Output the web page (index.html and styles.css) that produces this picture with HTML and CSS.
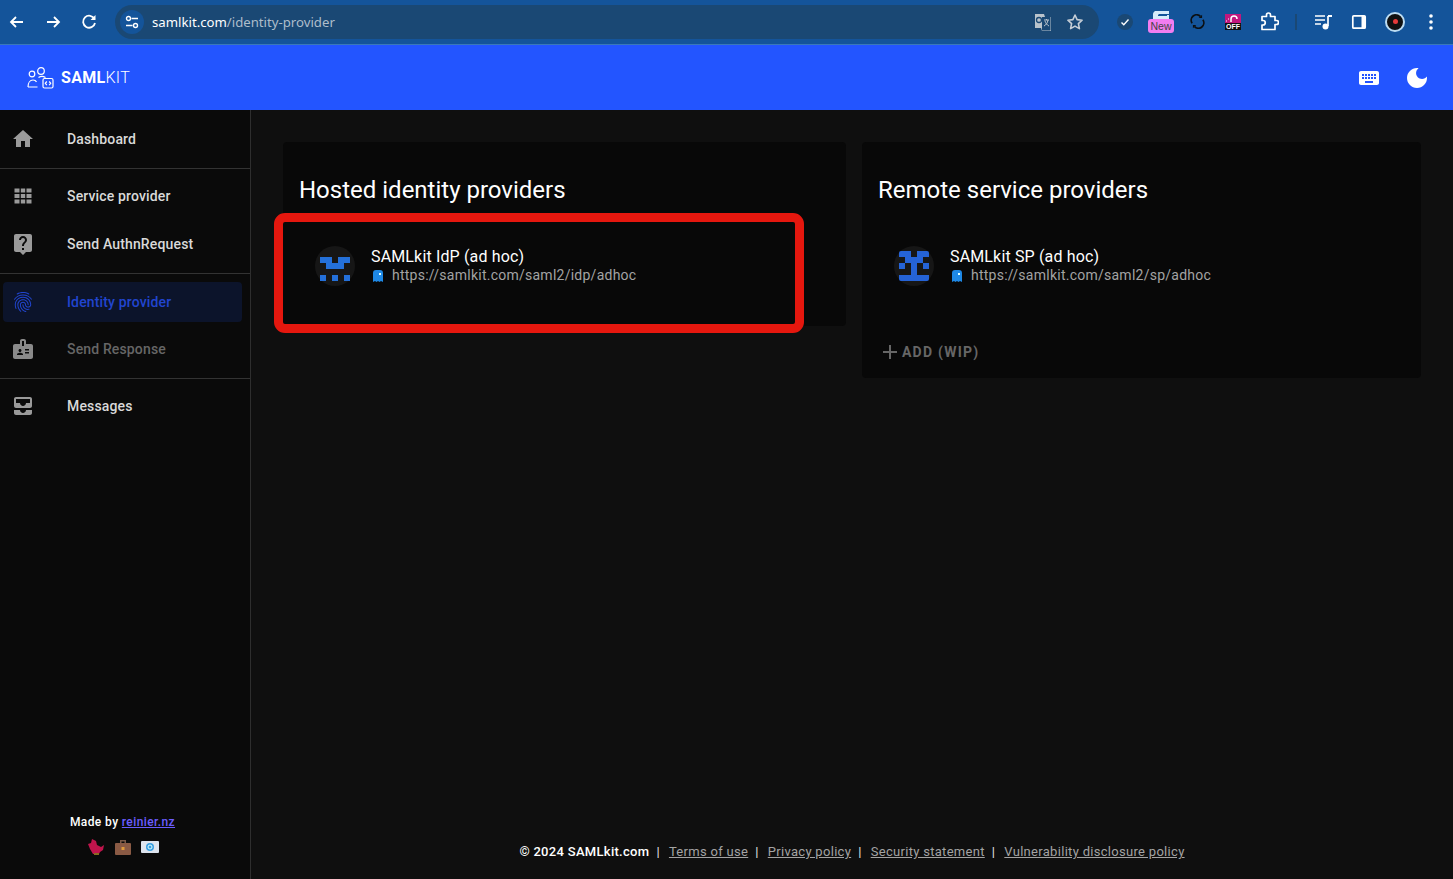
FILE: index.html
```html
<!DOCTYPE html>
<html lang="en">

<head>
    <meta charset="UTF-8">
    <title>SAMLkit - Identity provider</title>
    <link rel="stylesheet" href="styles.css">
</head>

<body>
    <div class="browser_bar">
        <div class="browser_nav">
            <svg class="icon_20" viewBox="0 0 20 20"><path d="M16 10H4M9 5l-5 5 5 5" class="stroke_white"/></svg>
            <svg class="icon_20" viewBox="0 0 20 20"><path d="M4 10h12M11 5l5 5-5 5" class="stroke_white"/></svg>
            <svg class="icon_20" viewBox="0 0 20 20"><path d="M15.500 7A6 6 0 1 0 16 11" class="stroke_white"/><path d="M16.500 3v5h-5z" fill="#fff"/></svg>
        </div>
        <div class="omnibox">
            <span class="site_info">
                <svg width="14" height="14" viewBox="0 0 14 14"><circle cx="3.500" cy="3.500" r="2" class="stroke_thin"/><path d="M6.500 3.500H13M1 10.500h6.500" class="stroke_thin"/><circle cx="10.500" cy="10.500" r="2" class="stroke_thin"/></svg>
            </span>
            <span class="url">samlkit.com<span class="url_path">/identity-provider</span></span>
            <span class="omni_right">
                <svg width="20" height="20" viewBox="0 0 20 20"><path d="M2 2h9l1 3h6v14H9l-1-3H2z" fill="#b9c3cc"/><path d="M9 5h8.500v13.500H9z" fill="#1a4874"/><path d="M11 8h5M13.500 7v1M15 8c-.5 3-2 5-4 6M12 9c.5 2 2 4 4 5" stroke="#b9c3cc" fill="none"/><circle cx="6" cy="8" r="2.500" stroke="#1a4874" stroke-width="1.300" fill="none"/></svg>
                <svg width="20" height="20" viewBox="0 0 20 20"><path d="M10 3l2.100 4.600 5 .6-3.700 3.400 1 5L10 14.100 5.600 16.600l1-5L2.900 8.200l5-.6z" fill="none" stroke="#c6ced6" stroke-width="1.600" stroke-linejoin="round"/></svg>
            </span>
        </div>
        <div class="extensions">
            <span class="ext_slot">
                <span class="ext_check">
                    <svg width="10" height="10" viewBox="0 0 10 10"><path d="M1.500 5.500l2.300 2.300L8.500 2.500" stroke="#fff" stroke-width="1.400" fill="none"/></svg>
                </span>
            </span>
            <span class="ext_slot">
                <span class="ext_new">
                    <svg width="16" height="9" viewBox="0 0 16 9"><path d="M2 0h14v3H6v1h10v5H0V4a4 4 0 0 1 2-4z" fill="#d8ebfa"/><path d="M5 3.500h9v1.500H5z" fill="#14549a"/></svg>
                    <span class="new_badge">New</span>
                </span>
            </span>
            <span class="ext_slot">
                <svg width="15" height="15" viewBox="0 0 18 18"><path d="M2.500 11A6.500 6.500 0 0 1 12.500 2.800M15.500 7a6.500 6.500 0 0 1-10 8.200" stroke="#0b0f12" stroke-width="2" fill="none"/><path d="M14.500 .8v4h-4zM3.500 17.200v-4h4z" fill="#0b0f12"/></svg>
            </span>
            <span class="ext_slot">
                <span class="ext_off">
                    <svg width="16" height="9" viewBox="0 0 16 9"><path d="M6 8V5a3 3 0 0 1 6 0" stroke="#fff" stroke-width="1.500" fill="none"/><path d="M1 7h1M3 5h1" stroke="#fff"/></svg>
                    <span class="off_label">OFF</span>
                </span>
            </span>
            <span class="ext_slot">
                <svg width="20" height="20" viewBox="0 0 20 20"><path d="M3 5h4.500V3.500a2 2 0 0 1 4 0V5H16v4h1.500a2 2 0 0 1 0 4H16v5H3v-4.500h1a2.200 2.200 0 0 0 0-4.500H3z" transform="translate(0 -.5)" stroke="#fff" stroke-width="1.700" fill="none" stroke-linejoin="round"/></svg>
            </span>
            <span class="ext_sep_slot"><span class="ext_sep"></span></span>
            <span class="ext_slot">
                <svg width="20" height="20" viewBox="0 0 20 20"><path d="M2 4h10M2 8h10M2 12h6" stroke="#fff" stroke-width="1.700"/><path d="M15 4v10" stroke="#fff" stroke-width="1.700"/><path d="M15 3h4v2h-4z" fill="#fff"/><circle cx="12.500" cy="14.500" r="3" fill="#fff"/></svg>
            </span>
            <span class="ext_slot">
                <svg width="20" height="20" viewBox="0 0 20 20"><rect x="3.800" y="3.800" width="12.400" height="12.400" rx="1" stroke="#fff" stroke-width="1.700" fill="none"/><path d="M12.500 3.800h3.700v12.400h-3.700z" fill="#fff"/></svg>
            </span>
            <span class="ext_slot">
                <span class="ext_avatar"><span class="avatar_dot"></span></span>
            </span>
            <span class="ext_slot">
                <svg width="6" height="18" viewBox="0 0 6 18"><circle cx="3" cy="3" r="1.800" fill="#fff"/><circle cx="3" cy="9" r="1.800" fill="#fff"/><circle cx="3" cy="15" r="1.800" fill="#fff"/></svg>
            </span>
        </div>
    </div>

    <header class="app_bar">
        <a class="brand">
            <svg width="27" height="22" viewBox="0 0 27 22"><circle cx="14" cy="4" r="3.300" class="logo_line"/><circle cx="5" cy="7" r="2.800" class="logo_line"/><path d="M1 20c0-4 2-7 5-7 1.500 0 3 .8 3.500 2M1 20h9.500M11.500 10.500c2-1.300 5-1.300 7 0" class="logo_line"/><rect x="16" y="11.500" width="10" height="9.500" rx="1.500" class="logo_line"/><path d="M19.800 14.500l-1.500 1.800 1.500 1.800M22.200 14.500l1.500 1.800-1.500 1.800" class="logo_line"/></svg>
            <span class="brand_name"><b>SAML</b>KIT</span>
        </a>
        <div class="app_actions">
            <span class="icon_button">
                <svg class="app_icon" viewBox="0 0 24 24"><path d="M20 5H4c-1.100 0-1.990.9-1.990 2L2 17c0 1.100.9 2 2 2h16c1.100 0 2-.9 2-2V7c0-1.100-.9-2-2-2zm-9 3h2v2h-2V8zm0 3h2v2h-2v-2zM8 8h2v2H8V8zm0 3h2v2H8v-2zm-1 2H5v-2h2v2zm0-3H5V8h2v2zm9 7H8v-2h8v2zm0-4h-2v-2h2v2zm0-3h-2V8h2v2zm3 3h-2v-2h2v2zm0-3h-2V8h2v2z"/></svg>
            </span>
            <span class="icon_button">
                <svg class="app_icon" viewBox="0 0 24 24"><path d="M12 2c-5.500 0-10 4.500-10 10s4.500 10 10 10 10-4.500 10-10c0-.5-.04-1-.11-1.500-1.080 1.510-2.850 2.500-4.860 2.500-3.290 0-5.970-2.680-5.970-5.970 0-2 .99-3.780 2.500-4.860C13 2.040 12.500 2 12 2z"/></svg>
            </span>
        </div>
    </header>

    <div class="layout">
        <nav class="sidebar">
            <div class="menu_group first_group">
                <a class="menu_item">
                    <svg class="menu_icon" viewBox="0 0 24 24"><path d="M10 20v-6h4v6h5v-8h3L12 3 2 12h3v8z"/></svg>
                    Dashboard
                </a>
            </div>
            <div class="menu_group">
                <a class="menu_item">
                    <svg class="menu_icon" viewBox="0 0 24 24"><path d="M3.500 4.500h5v4h-5zM9.800 4.500h4.400v4H9.800zM15.500 4.500h5v4h-5zM3.500 10h5v4h-5zM9.800 10h4.400v4H9.800zM15.500 10h5v4h-5zM3.500 15.500h5v4h-5zM9.800 15.500h4.400v4H9.800zM15.500 15.500h5v4h-5z"/></svg>
                    Service provider
                </a>
                <a class="menu_item">
                    <svg class="menu_icon" viewBox="0 0 24 24"><path d="M19 2H5c-1.110 0-2 .9-2 2v14c0 1.100.89 2 2 2h4l3 3 3-3h4c1.100 0 2-.9 2-2V4c0-1.100-.9-2-2-2zm-6 16h-2v-2h2v2zm2.070-7.750l-.9.920C13.450 11.900 13 12.500 13 14h-2v-.5c0-1.100.45-2.100 1.170-2.830l1.240-1.260c.37-.36.59-.86.59-1.410 0-1.100-.9-2-2-2s-2 .9-2 2H8c0-2.210 1.790-4 4-4s4 1.790 4 4c0 .88-.36 1.680-.93 2.250z"/></svg>
                    Send AuthnRequest
                </a>
            </div>
            <div class="menu_group">
                <a class="menu_item selected">
                    <svg class="menu_icon" viewBox="0 0 24 24"><path d="M17.810 4.470c-.08 0-.16-.02-.23-.06C15.660 3.420 14 3 12.010 3c-1.980 0-3.860.47-5.570 1.410-.24.13-.54.04-.68-.2-.13-.24-.04-.55.2-.68C7.820 2.520 9.860 2 12.010 2c2.130 0 3.990.47 6.030 1.520.25.13.34.43.21.67-.09.18-.26.28-.44.28zM3.500 9.720c-.1 0-.2-.03-.29-.09-.23-.16-.28-.47-.12-.7.99-1.400 2.250-2.500 3.750-3.270C9.980 4.040 14 4.030 17.150 5.650c1.500.77 2.760 1.860 3.750 3.250.16.22.11.54-.12.7-.23.16-.54.11-.7-.12-.9-1.260-2.040-2.250-3.390-2.940-2.870-1.470-6.540-1.470-9.400.01-1.360.7-2.500 1.700-3.400 2.960-.08.14-.23.21-.39.21zm6.250 12.070c-.13 0-.26-.05-.35-.15-.87-.87-1.340-1.430-2.010-2.640-.69-1.230-1.050-2.730-1.050-4.340 0-2.970 2.540-5.390 5.660-5.390s5.660 2.420 5.660 5.390c0 .28-.22.5-.5.5s-.5-.22-.5-.5c0-2.420-2.090-4.390-4.660-4.390-2.570 0-4.660 1.970-4.660 4.390 0 1.440.32 2.770.93 3.850.64 1.150 1.080 1.640 1.850 2.420.19.2.19.51 0 .71-.11.1-.24.15-.37.15zm7.170-1.850c-1.190 0-2.240-.3-3.100-.89-1.490-1.010-2.380-2.650-2.380-4.390 0-.28.22-.5.5-.5s.5.22.5.5c0 1.410.72 2.740 1.940 3.560.71.48 1.540.71 2.540.71.24 0 .64-.03 1.040-.1.27-.05.53.13.58.41.05.27-.13.53-.41.58-.57.11-1.070.12-1.210.12zM14.910 22c-.04 0-.09-.01-.13-.02-1.590-.44-2.630-1.030-3.720-2.100-1.400-1.390-2.170-3.240-2.170-5.220 0-1.620 1.380-2.940 3.080-2.940 1.700 0 3.080 1.320 3.080 2.940 0 1.070.93 1.940 2.080 1.940s2.080-.87 2.080-1.940c0-3.770-3.250-6.830-7.250-6.830-2.840 0-5.440 1.580-6.610 4.030-.39.81-.59 1.760-.59 2.800 0 .78.07 2.010.67 3.610.1.26-.03.55-.29.64-.26.1-.55-.04-.64-.29-.49-1.310-.73-2.610-.73-3.960 0-1.200.23-2.290.68-3.240 1.330-2.790 4.280-4.600 7.510-4.600 4.550 0 8.250 3.510 8.250 7.830 0 1.620-1.380 2.940-3.080 2.940s-3.080-1.320-3.080-2.940c0-1.070-.93-1.940-2.080-1.940s-2.080.87-2.080 1.940c0 1.710.66 3.310 1.870 4.510.95.94 1.860 1.460 3.270 1.850.27.07.42.35.35.61-.05.23-.26.38-.47.38z"/></svg>
                    Identity provider
                </a>
                <a class="menu_item disabled">
                    <svg class="menu_icon" viewBox="0 0 24 24"><path d="M20 7h-5V4c0-1.100-.9-2-2-2h-2c-1.100 0-2 .9-2 2v3H4c-1.100 0-2 .9-2 2v11c0 1.100.9 2 2 2h16c1.100 0 2-.9 2-2V9c0-1.100-.9-2-2-2zM9 12c.83 0 1.500.67 1.500 1.500S9.830 15 9 15s-1.500-.67-1.500-1.500S8.170 12 9 12zm3 6H6v-.75c0-1 2-1.500 3-1.500s3 .5 3 1.500V18zm1-9h-2V4h2v5zm5 7.500h-4V15h4v1.500zm0-3h-4V12h4v1.500z"/></svg>
                    Send Response
                </a>
            </div>
            <div class="menu_group last_group">
                <a class="menu_item">
                    <svg class="menu_icon" viewBox="0 0 24 24"><path d="M19 3H5c-1.100 0-2 .9-2 2v7c0 1.100.9 2 2 2h14c1.100 0 2-.9 2-2V5c0-1.100-.9-2-2-2zm0 6h-4c0 1.620-1.380 3-3 3s-3-1.380-3-3H5V5h14v4zm-4 7h6v3c0 1.100-.9 2-2 2H5c-1.100 0-2-.9-2-2v-3h6c0 1.660 1.340 3 3 3s3-1.340 3-3z"/></svg>
                    Messages
                </a>
            </div>
            <div class="made_by">
                <p>Made by <a href="#">reinier.nz</a></p>
                <div class="made_icons">
                    <svg width="18" height="18" viewBox="0 0 18 18"><path d="M1 6l3-1 1-4 4 2 1 4 4 2 3-2-1 5-3 2-1 2H6L3 11z" fill="#c0144c"/><path d="M7 15h5v2H7z" fill="#8a6a20"/></svg>
                    <svg width="18" height="18" viewBox="0 0 18 18"><path d="M6 2h6v4h-1.500V3.500h-3V6H6z" fill="#7b5a48"/><rect x="1" y="5" width="16" height="12" rx="1" fill="#8a5a44"/><rect x="7.500" y="9" width="3" height="3" fill="#e09a3a"/></svg>
                    <svg width="18" height="18" viewBox="0 0 18 18"><rect y="3" width="18" height="12" rx="1" fill="#dde4ee"/><circle cx="9" cy="9" r="4" fill="#3a9ee0"/><circle cx="9" cy="9" r="2" fill="none" stroke="#dff"/></svg>
                </div>
            </div>
        </nav>

        <main class="main">
            <div class="cards">
                <section class="card card_hosted">
                    <h2>Hosted identity providers</h2>
                    <div class="provider highlighted">
                        <span class="avatar">
                            <svg width="30" height="30" viewBox="0 0 30 30"><path d="M0 6h12v6H0zM18 6h12v6H18zM6 12h18v6H6zM0 24h6v6H0zM12 24h6v6h-6zM24 24h6v6h-6z" fill="#2470d9"/></svg>
                        </span>
                        <div class="provider_text">
                            <div class="provider_name">SAMLkit IdP (ad hoc)</div>
                            <div class="provider_url">
                                <svg width="12" height="14" viewBox="0 0 12 14"><path d="M1 13V4a3 3 0 0 1 3-3h4a3 3 0 0 1 3 3v9l-2-1-1.500 1-1.500-1-1.500 1L3 12z" fill="#1e88e5"/><rect x="7" y="4" width="2" height="2" fill="#dff"/></svg>
                                https://samlkit.com/saml2/idp/adhoc
                            </div>
                        </div>
                    </div>
                </section>
                <section class="card card_remote">
                    <h2>Remote service providers</h2>
                    <div class="provider">
                        <span class="avatar">
                            <svg width="30" height="30" viewBox="0 0 30 30"><path d="M2 0h10v6h6V0h10a2 2 0 0 1 2 2v4h-6v6H6V6H0V2a2 2 0 0 1 2-2zM0 12h6v6H0zM12 12h6v12h-6zM24 12h6v6h-6zM0 24h30v4a2 2 0 0 1-2 2H2a2 2 0 0 1-2-2z" fill="#2563d6"/></svg>
                        </span>
                        <div class="provider_text">
                            <div class="provider_name">SAMLkit SP (ad hoc)</div>
                            <div class="provider_url">
                                <svg width="12" height="14" viewBox="0 0 12 14"><path d="M1 13V4a3 3 0 0 1 3-3h4a3 3 0 0 1 3 3v9l-2-1-1.500 1-1.500-1-1.500 1L3 12z" fill="#1e88e5"/><rect x="7" y="4" width="2" height="2" fill="#dff"/></svg>
                                https://samlkit.com/saml2/sp/adhoc
                            </div>
                        </div>
                    </div>
                    <div class="add_row">
                        <svg width="16" height="16" viewBox="0 0 16 16"><path d="M8 1v14M1 8h14" stroke="#666" stroke-width="2"/></svg>
                        ADD (WIP)
                    </div>
                </section>
            </div>
            <footer class="footer">
                <b>© 2024 SAMLkit.com</b>
                <span class="sep">|</span><a href="#">Terms of use</a>
                <span class="sep">|</span><a href="#">Privacy policy</a>
                <span class="sep">|</span><a href="#">Security statement</a>
                <span class="sep">|</span><a href="#">Vulnerability disclosure policy</a>
            </footer>
        </main>
    </div>
</body>

</html>
```

FILE: styles.css
```css
*,
*::after {
    box-sizing: border-box;
}

html,
body {
    height: 100%;
}

body {
    margin: 0;
    display: flex;
    flex-direction: column;
    overflow: hidden;
    font-family: Roboto, sans-serif;
    color: #fff;
    background-color: #0f0f0f;
}

/* Chrome */
.browser_bar {
    display: flex;
    align-items: center;
    flex: 0 0 45px;
    height: 45px;
    padding: 0 0 1px 7px;
    background-color: #14549a;
    border-bottom: 1px solid #3a78b8;
}

.browser_nav {
    display: flex;
    gap: 16px;
    width: 108px;
}

.icon_20 {
    width: 20px;
    height: 20px;
}

.stroke_white {
    fill: none;
    stroke: #fff;
    stroke-width: 1.8;
}

.stroke_thin {
    fill: none;
    stroke: #fff;
    stroke-width: 1.4;
}

.omnibox {
    display: flex;
    align-items: center;
    width: 984px;
    height: 34px;
    padding-left: 5px;
    border-radius: 17px;
    background-color: #1a4874;
    font-family: "Noto Sans", sans-serif;
    font-size: 13.2px;
}

.site_info {
    display: flex;
    align-items: center;
    justify-content: center;
    width: 24px;
    height: 24px;
    border-radius: 50%;
    background-color: #14549a;
}

.url {
    margin-left: 8px;
    color: #fff;
}

.url_path {
    color: #aebdcb;
}

.omni_right {
    display: flex;
    align-items: center;
    gap: 12px;
    margin-left: auto;
    padding-right: 14px;
}

.extensions {
    display: flex;
    align-items: center;
    padding-left: 8px;
}

.ext_slot {
    display: flex;
    align-items: center;
    justify-content: center;
    width: 36px;
    height: 36px;
}

.ext_sep_slot {
    display: flex;
    justify-content: center;
    width: 18px;
}

.ext_check {
    display: flex;
    align-items: center;
    justify-content: center;
    width: 16px;
    height: 16px;
    border-radius: 50%;
    background-color: #1a4874;
}

.ext_new {
    position: relative;
    display: block;
    width: 26px;
    height: 22px;
}

.ext_new svg {
    display: block;
    margin: 0 0 0 5px;
}

.new_badge {
    position: absolute;
    left: 0;
    top: 8px;
    width: 26px;
    height: 14px;
    border-radius: 3px;
    background-color: #f27df0;
    color: #444;
    font-family: "Liberation Sans", sans-serif;
    font-size: 10.5px;
    line-height: 14px;
    text-align: center;
}

.ext_off {
    display: flex;
    flex-direction: column;
    align-items: center;
    width: 16px;
    height: 16px;
    background-color: #c2177e;
}

.off_label {
    width: 16px;
    background-color: #111;
    font-family: "Liberation Sans", sans-serif;
    font-size: 7px;
    font-weight: bold;
    line-height: 7px;
    text-align: center;
}

.ext_sep {
    width: 2px;
    height: 16px;
    background-color: #1a4874;
}

.ext_avatar {
    display: flex;
    align-items: center;
    justify-content: center;
    width: 20px;
    height: 20px;
    border: 2px solid #bcdcf2;
    border-radius: 50%;
    background-color: #111;
}

.avatar_dot {
    width: 5px;
    height: 5px;
    border-radius: 50%;
    background-color: #e83a3a;
}

/* App bar */
.app_bar {
    display: flex;
    align-items: center;
    justify-content: space-between;
    flex: 0 0 65px;
    padding: 0 12px 0 27px;
    background-color: #2355ff;
}

.brand {
    display: flex;
    align-items: center;
    gap: 7px;
}

.logo_line {
    fill: none;
    stroke: #fff;
    stroke-width: 1.2;
}

.brand_name {
    font-size: 16px;
    font-weight: 300;
    letter-spacing: .3px;
}

.brand_name b {
    font-weight: 700;
}

.app_actions {
    display: flex;
    align-items: center;
}

.icon_button {
    display: flex;
    align-items: center;
    justify-content: center;
    width: 48px;
    height: 48px;
}

.app_icon {
    width: 24px;
    height: 24px;
    fill: #fff;
}

/* Sidebar */
.layout {
    display: flex;
    flex: 1;
    min-height: 0;
}

.sidebar {
    display: flex;
    flex-direction: column;
    flex: 0 0 251px;
    background-color: #0a0a0a;
    border-right: 1px solid #2e2e2e;
}

.menu_group {
    padding: 3px 0 5px;
    border-bottom: 1px solid #333;
}

.first_group {
    padding-top: 5px;
}

.last_group {
    border-bottom: none;
}

.menu_item {
    display: flex;
    align-items: center;
    height: 48px;
    margin: 0 8px 0 3px;
    padding-left: 8px;
    border-radius: 4px;
    color: #d9d9d9;
    font-size: 14px;
    font-weight: 500;
    letter-spacing: .15px;
}

.menu_icon {
    flex: none;
    width: 24px;
    height: 24px;
    margin-right: 32px;
    fill: #9a9a9a;
}

.selected {
    height: 40px;
    margin-top: 5px;
    margin-bottom: 3px;
    padding-bottom: 1px;
    background-color: #0c142b;
    color: #2145cf;
}

.selected .menu_icon {
    fill: #2145cf;
}

.disabled {
    color: #666;
}

.disabled .menu_icon {
    fill: #8a8a8a;
}

.made_by {
    margin-top: auto;
    padding-bottom: 23px;
    font-size: 12px;
    font-weight: 500;
    letter-spacing: .4px;
    text-align: center;
}

.made_by p {
    margin: 0 0 9px;
    padding-right: 5px;
}

.made_by a {
    color: #6a5cff;
}

.made_icons {
    display: flex;
    justify-content: center;
    gap: 9px;
    padding-right: 4px;
}

/* Main */
.main {
    display: flex;
    flex-direction: column;
    flex: 1;
    padding: 32px 32px 0;
}

.cards {
    display: flex;
    align-items: flex-start;
    gap: 16px;
    flex: 1;
}

.card {
    padding: 16px;
    border-radius: 4px;
    background-color: #080808;
}

.card_hosted {
    flex: 0 0 563px;
}

.card_remote {
    flex: 1;
}

.card h2 {
    margin: 0;
    padding-top: 16px;
    height: 70px;
    font-size: 24px;
    font-weight: 400;
    line-height: 32px;
}

.provider {
    position: relative;
    display: flex;
    align-items: center;
    height: 64px;
    padding-left: 16px;
    margin-top: 6px;
    margin-bottom: 12px;
}

.highlighted::after {
    content: "";
    position: absolute;
    left: -25px;
    top: -21px;
    width: 530px;
    height: 120px;
    border: 9px solid #e5170e;
    border-radius: 11px;
}

.avatar {
    display: flex;
    align-items: center;
    justify-content: center;
    width: 40px;
    height: 40px;
    margin-right: 16px;
    border-radius: 50%;
    background-color: #161616;
}

.provider_name {
    font-size: 16px;
    letter-spacing: .15px;
    line-height: 19px;
}

.provider_url {
    display: flex;
    align-items: center;
    gap: 8px;
    color: #a3a3a3;
    font-size: 14px;
    letter-spacing: .25px;
    line-height: 19px;
}

.provider_url svg {
    margin-left: 1px;
}

.add_row {
    display: flex;
    align-items: center;
    gap: 4px;
    height: 36px;
    padding-left: 4px;
    margin-top: 36px;
    margin-bottom: -8px;
    color: #666;
    font-size: 14px;
    font-weight: 700;
    letter-spacing: 1.2px;
}

.footer {
    height: 55px;
    padding-top: 20px;
    text-align: center;
    font-size: 13px;
    letter-spacing: .3px;
    color: #e6e6e6;
}

.footer b {
    font-weight: 500;
    color: #fff;
}

.footer a {
    color: #a3a3a3;
    text-decoration: underline;
}

.sep {
    margin: 0 9px 0 3.5px;
}
```
